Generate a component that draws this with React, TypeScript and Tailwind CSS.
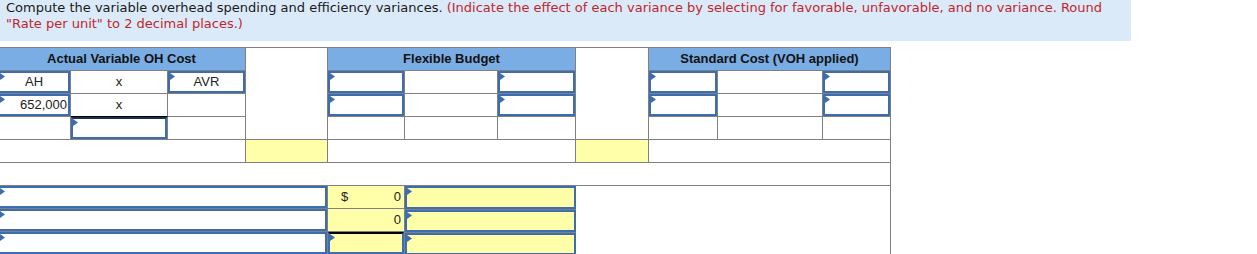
import React from "react";

// Small blue marker drawn in the top-left corner of every entry box
function Marker() {
  return (
    <svg
      className="absolute left-0 top-0"
      width="5"
      height="7"
      viewBox="0 0 5 7"
    >
      <polygon points="0,0 5,3.5 0,7" fill="#3c6db0" />
    </svg>
  );
}

type BoxProps = {
  children?: React.ReactNode;
  className?: string;
};

// Entry box: 2px blue frame filling its cell
function Box({ children, className = "" }: BoxProps) {
  return (
    <div
      className={
        "relative h-full w-full border-2 border-[#3c6db0] flex items-center " +
        className
      }
    >
      <Marker />
      {children}
    </div>
  );
}

const cell = "border-r border-b border-[#808080]";
const head =
  "col-span-3 border-r border-b border-[#808080] bg-[#7aade3] flex items-center justify-center font-bold text-[13px] text-[#111]";
const yellow = "bg-[#ffffaa]";

export default function App() {
  return (
    <div className="w-[1257px] h-[254px] overflow-hidden bg-white font-['Liberation_Sans',Arial,sans-serif]">
      <div className="w-[1131px] h-[41px] bg-[#dbeaf8] px-[6px] pt-0 text-[13px] leading-[16px] text-[#1a1a1a] font-['DejaVu_Sans',Verdana,sans-serif]">
        Compute the variable overhead spending and efficiency variances.{" "}
        <span className="text-[#c0262d]">
          (Indicate the effect of each variance by selecting for favorable,
          unfavorable, and no variance. Round "Rate per unit" to 2 decimal
          places.)
        </span>
      </div>

      <div className="mt-[6px] ml-[-2px] grid grid-cols-[73px_97px_78px_82px_77px_93px_78px_73px_69px_105px_68px] auto-rows-[23px] w-[893px] border-t border-[#808080] text-[13px] text-[#222]">
        {/* Column group headings */}
        <div className={head}>Actual Variable OH Cost</div>
        <div className={"row-span-4 " + cell}></div>
        <div className={head}>Flexible Budget</div>
        <div className={"row-span-4 " + cell}></div>
        <div className={head}>Standard Cost (VOH applied)</div>

        {/* Labels row */}
        <div className={cell}>
          <Box className="justify-center">AH</Box>
        </div>
        <div className={cell + " flex items-center justify-center"}>x</div>
        <div className={cell}>
          <Box className="justify-center">AVR</Box>
        </div>
        <div className={cell}>
          <Box />
        </div>
        <div className={cell}></div>
        <div className={cell}>
          <Box />
        </div>
        <div className={cell}>
          <Box />
        </div>
        <div className={cell}></div>
        <div className={cell}>
          <Box />
        </div>

        {/* Values row */}
        <div className={cell}>
          <Box className="justify-end pr-[1px]">652,000</Box>
        </div>
        <div className="border-r border-b border-[#808080] border-b-black flex items-center justify-center">
          x
        </div>
        <div className={cell}></div>
        <div className={cell}>
          <Box />
        </div>
        <div className={cell}></div>
        <div className={cell}>
          <Box />
        </div>
        <div className={cell}>
          <Box />
        </div>
        <div className={cell}></div>
        <div className={cell}>
          <Box />
        </div>

        {/* Product row */}
        <div className={cell}></div>
        <div className={cell}>
          <Box className="border-t-[#1b2f55]" />
        </div>
        <div className={cell}></div>
        <div className={cell}></div>
        <div className={cell}></div>
        <div className={cell}></div>
        <div className={cell}></div>
        <div className={cell}></div>
        <div className={cell}></div>

        {/* Totals row */}
        <div className={"col-span-3 " + cell}></div>
        <div className={cell + " " + yellow}></div>
        <div className={"col-span-3 " + cell}></div>
        <div className={cell + " " + yellow}></div>
        <div className={"col-span-3 " + cell}></div>

        {/* Spacer row */}
        <div className={"col-span-11 " + cell}></div>

        {/* Variance rows */}
        <div className={"col-span-4 " + cell}>
          <Box />
        </div>
        <div
          className={
            cell + " " + yellow + " flex items-center justify-between pl-[13px] pr-[3px]"
          }
        >
          <span>$</span>
          <span>0</span>
        </div>
        <div className={"col-span-2 " + yellow}>
          <Box />
        </div>
        <div className="col-span-4 row-span-3 border-r border-[#808080]"></div>

        <div className={"col-span-4 " + cell}>
          <Box />
        </div>
        <div
          className={
            "border-r border-b border-[#808080] " +
            yellow +
            " flex items-center justify-end pr-[3px]"
          }
        >
          0
        </div>
        <div className={"col-span-2 border-t border-[#808080] " + yellow}>
          <Box />
        </div>

        <div className={"col-span-4 " + cell}>
          <Box />
        </div>
        <div className={"border-r border-b border-[#808080] border-b-black " + yellow}>
          <Box className="border-t-black" />
        </div>
        <div className={"col-span-2 border-t border-[#808080] " + yellow}>
          <Box />
        </div>
      </div>
    </div>
  );
}
